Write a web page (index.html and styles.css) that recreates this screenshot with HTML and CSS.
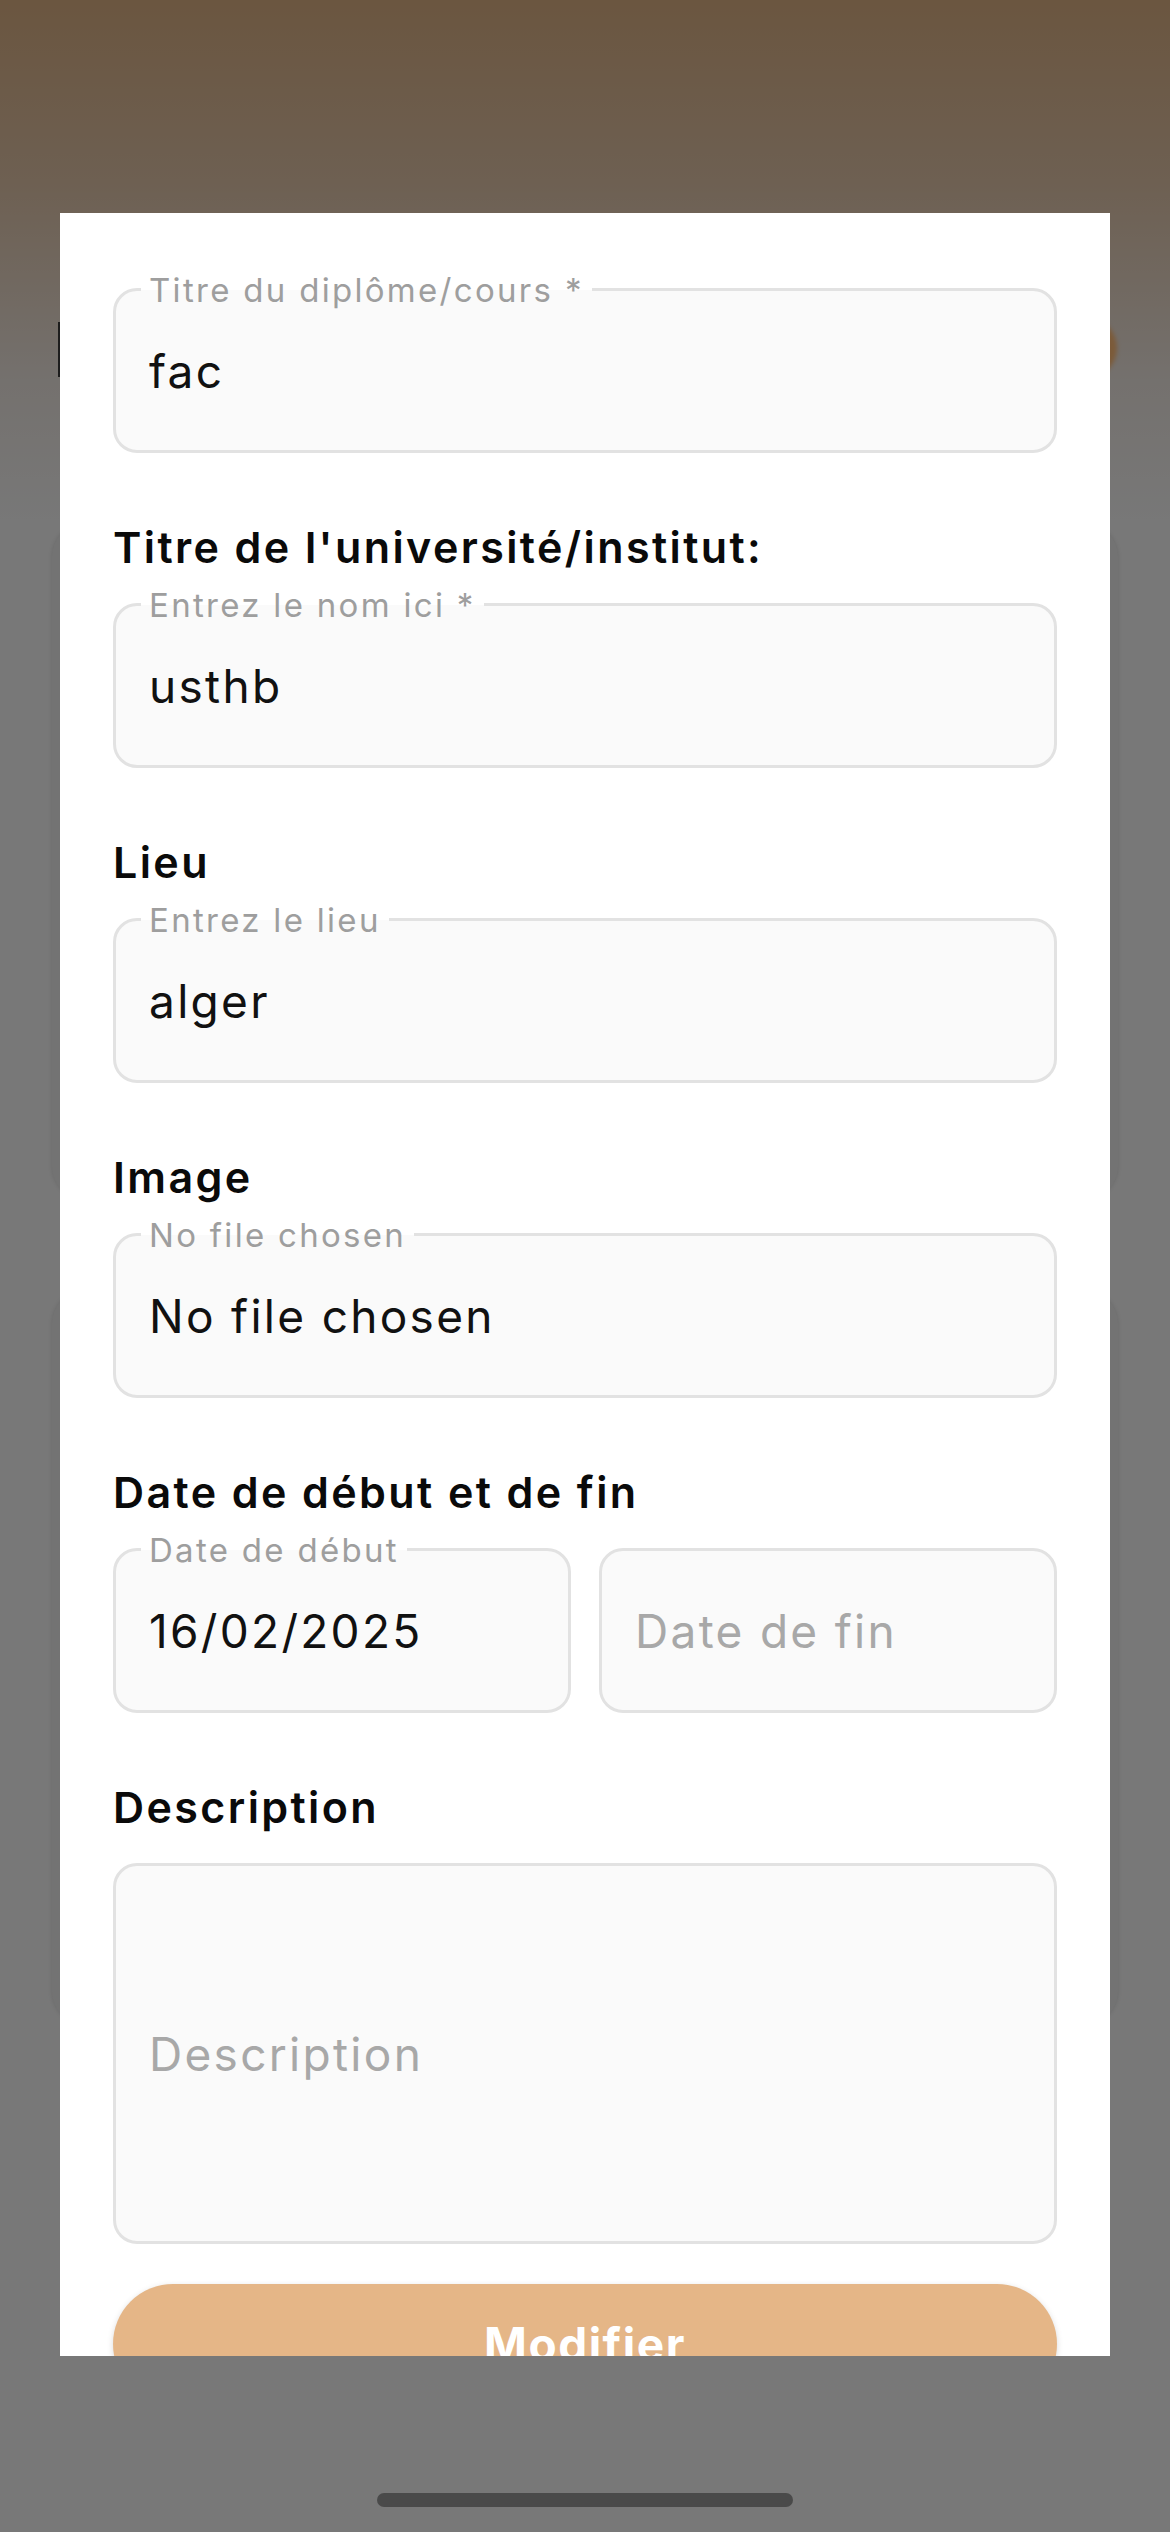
FILE: index.html
```html
<!DOCTYPE html>
<html lang="fr">
<head>
<meta charset="utf-8">
<title>Modifier formation</title>
<link rel="stylesheet" href="styles.css">
</head>
<body>
<div class="app">
  <div class="app-header">
    <span class="back-edge"></span>
    <span class="avatar"></span>
  </div>
  <div class="bg-card bg-card-1"></div>
  <div class="bg-card bg-card-2"></div>
</div>

<div class="overlay">
  <div class="modal">
    <form class="form">
      <div class="field">
        <span class="field-label">Titre du diplôme/cours *</span>
        <span class="value">fac</span>
      </div>

      <h2 class="section-title">Titre de l'université/institut:</h2>
      <div class="field">
        <span class="field-label">Entrez le nom ici *</span>
        <span class="value">usthb</span>
      </div>

      <h2 class="section-title">Lieu</h2>
      <div class="field">
        <span class="field-label">Entrez le lieu</span>
        <span class="value">alger</span>
      </div>

      <h2 class="section-title">Image</h2>
      <div class="field">
        <span class="field-label">No file chosen</span>
        <span class="value">No file chosen</span>
      </div>

      <h2 class="section-title">Date de début et de fin</h2>
      <div class="date-row">
        <div class="field">
          <span class="field-label">Date de début</span>
          <span class="value">16/02/2025</span>
        </div>
        <div class="field">
          <span class="value placeholder">Date de fin</span>
        </div>
      </div>

      <h2 class="section-title">Description</h2>
      <div class="field field-area">
        <span class="value placeholder">Description</span>
      </div>

      <button type="button" class="submit">Modifier</button>
    </form>
  </div>
  <div class="home-indicator"></div>
</div>
</body>
</html>
```

FILE: styles.css
```css
html, body {
  margin: 0;
  padding: 0;
}

body {
  width: 1170px;
  height: 2532px;
  overflow: hidden;
  font-family: Inter, "Noto Sans", "Liberation Sans", sans-serif;
  background: linear-gradient(180deg, #d6ac80 0px, #dcc0a4 180px, #e9e2dc 380px, #f0f0f0 520px, #f0f0f0 100%);
}

/* underlying page (dimmed by the overlay) */
.app {
  padding-top: 317px;
}

.app-header {
  height: 60px;
  display: flex;
  justify-content: space-between;
  align-items: stretch;
  padding: 0 53px 0 58px;
}

.back-edge {
  width: 2px;
  margin-top: 5px;
  background: #3a3a3a;
}

.avatar {
  width: 62px;
  height: 62px;
  border-radius: 50%;
  background: #f7b572;
  filter: blur(2px);
}

.bg-card {
  margin: 0 52px;
  background: #e6e6e6;
  border-radius: 34px;
  box-shadow: 0 0 4px rgba(0, 0, 0, 0.12);
}

.bg-card-1 {
  margin-top: 146px;
  height: 677px;
}

.bg-card-2 {
  margin-top: 90px;
  height: 735px;
}

/* overlay + modal */
.overlay {
  position: fixed;
  inset: 0;
  background: rgba(0, 0, 0, 0.5);
  display: flex;
  flex-direction: column;
}

.modal {
  margin: 213px 60px 0;
  width: 1050px;
  height: 2143px;
  overflow: hidden;
  background: #ffffff;
}

.form {
  margin: 0;
  padding: 75px 53px 0;
}

.section-title {
  margin: 69px 0 31px;
  font-size: 43px;
  line-height: 50px;
  font-weight: 600;
  color: #0a0a0a;
  letter-spacing: 2.4px;
}

.field {
  position: relative;
  box-sizing: border-box;
  height: 165px;
  border: 3px solid #e2e2e2;
  border-radius: 24px;
  background: #fafafa;
  display: flex;
  align-items: center;
  padding: 0 33px;
}

.field-label {
  position: absolute;
  top: -21px;
  left: 25px;
  padding: 0 8px;
  font-size: 33px;
  line-height: 40px;
  color: #9e9e9e;
  letter-spacing: 2.3px;
  background: linear-gradient(180deg, #ffffff 50%, #fafafa 50%);
}

.value {
  font-size: 46px;
  line-height: 56px;
  color: #111111;
  letter-spacing: 2.3px;
}

.placeholder {
  color: #a8a8a8;
}

.date-row {
  display: grid;
  grid-template-columns: 1fr 1fr;
  gap: 28px;
}

.field-area {
  height: 381px;
}

.submit {
  display: block;
  width: 100%;
  height: 120px;
  margin-top: 40px;
  border: 0;
  border-radius: 60px;
  background: #e5b687;
  color: #ffffff;
  font-family: inherit;
  font-size: 46px;
  font-weight: 700;
  letter-spacing: 1.5px;
  box-shadow: 0 2px 6px rgba(0, 0, 0, 0.15);
}

.home-indicator {
  position: absolute;
  left: 377px;
  top: 2493px;
  width: 416px;
  height: 14px;
  border-radius: 7px;
  background: #4a4a4a;
}
```
